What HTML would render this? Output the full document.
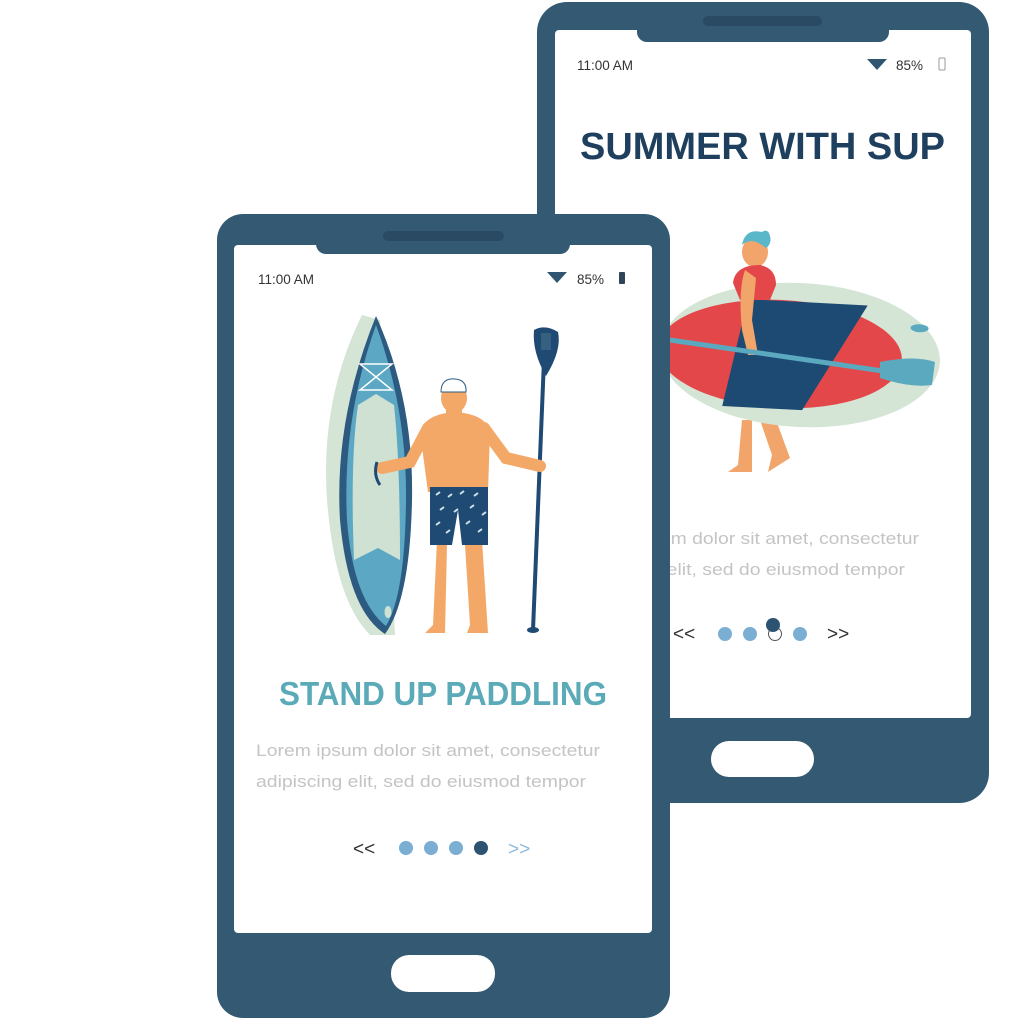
<!DOCTYPE html>
<html><head><meta charset="utf-8"><style>
html,body{margin:0;padding:0;background:#fff;width:1024px;height:1024px;overflow:hidden}
svg{display:block}
text{font-family:"Liberation Sans",sans-serif}
</style></head><body>
<svg width="1024" height="1024" viewBox="0 0 1024 1024" xmlns="http://www.w3.org/2000/svg">
<!-- BACK PHONE -->
<rect x="537" y="2" width="452" height="801" rx="30" fill="#345a73"/>
<rect x="555" y="30" width="416" height="688" rx="4" fill="#fff"/>
<rect x="637" y="2" width="252" height="40" rx="10" fill="#345a73"/>
<rect x="703" y="16" width="119" height="10" rx="5" fill="#2a4a63"/>
<rect x="711" y="741" width="103" height="36" rx="18" fill="#fff"/>
<text x="577" y="70" font-size="13.5" fill="#333">11:00 AM</text>
<path d="M867 59 L887 59 L877 70 Z" fill="#2f5570"/>
<text x="896" y="70" font-size="13.5" fill="#333">85%</text>
<rect x="939" y="58" width="6" height="12" rx="1" fill="none" stroke="#999" stroke-width="1"/>
<text x="580" y="159" font-size="38" font-weight="bold" fill="#1f3f5f" textLength="365" lengthAdjust="spacingAndGlyphs">SUMMER WITH SUP</text>
<!-- woman legs -->
<path d="M742 420 L738 465 L728 472 L752 472 L752 420 Z" fill="#f2a56b"/>
<path d="M760 420 L772 455 L768 472 L790 458 L776 420 Z" fill="#f2a56b"/>
<!-- board -->
<g transform="rotate(3 800 355)">
<ellipse cx="800" cy="355" rx="140" ry="72" fill="#d4e4d5"/>
<ellipse cx="780" cy="355" rx="122" ry="54" fill="#e4474a"/>
<path d="M745 302 L865 302 L805 410 L725 410 Z" fill="#1d4a73"/>
<ellipse cx="918" cy="322" rx="9" ry="4" fill="#5ba9bf"/>
</g>
<!-- woman body -->
<ellipse cx="755" cy="252" rx="13" ry="15" fill="#f2a56b"/>
<path d="M742 245 Q745 228 762 232 Q768 228 770 236 Q772 244 766 248 Q752 236 742 245Z" fill="#5ab6c9"/>
<path d="M733 283 Q735 265 760 265 Q776 268 776 285 L770 300 L740 300 Z" fill="#e4474a"/>
<path d="M745 270 Q738 290 742 330 L748 355 L758 355 L752 320 L756 278 Z" fill="#f2a56b"/>
<!-- paddle -->
<path d="M670 340 L890 372" stroke="#5ba9bf" stroke-width="5"/>
<path d="M880 362 Q915 355 935 362 L932 385 Q910 388 880 378 Z" fill="#5ba9bf"/>
<text x="575" y="544" font-size="17" fill="#c4c4c4" textLength="344" lengthAdjust="spacingAndGlyphs">Lorem ipsum dolor sit amet, consectetur</text>
<text x="575" y="575" font-size="17" fill="#c4c4c4" textLength="330" lengthAdjust="spacingAndGlyphs">adipiscing elit, sed do eiusmod tempor</text>
<text x="673" y="640" font-size="19" fill="#333">&lt;&lt;</text>
<circle cx="725" cy="634" r="7" fill="#7aaed3"/>
<circle cx="750" cy="634" r="7" fill="#7aaed3"/>
<circle cx="775" cy="634" r="6.5" fill="#fff" stroke="#555" stroke-width="1"/>
<circle cx="773" cy="625" r="7" fill="#2d5373"/>
<circle cx="800" cy="634" r="7" fill="#7aaed3"/>
<text x="827" y="640" font-size="19" fill="#333">&gt;&gt;</text>

<!-- FRONT PHONE -->
<rect x="217" y="214" width="453" height="804" rx="26" fill="#345a73"/>
<rect x="234" y="245" width="418" height="688" rx="4" fill="#fff"/>
<rect x="316" y="214" width="254" height="40" rx="10" fill="#345a73"/>
<rect x="383" y="231" width="121" height="10" rx="5" fill="#2a4a63"/>
<rect x="391" y="955" width="104" height="37" rx="18" fill="#fff"/>
<text x="258" y="284" font-size="13.5" fill="#333">11:00 AM</text>
<path d="M547 272 L567 272 L557 283 Z" fill="#2f5570"/>
<text x="577" y="284" font-size="13.5" fill="#333">85%</text>
<rect x="619" y="272" width="6" height="12" rx="1" fill="#2f4458"/>
<!-- board -->
<path d="M362 315 Q320 400 327 500 Q335 600 370 635 L395 635 L380 320 Z" fill="#d4e4d5"/>
<path d="M376 316 Q334 420 340 520 Q348 610 385 634 Q410 600 412 500 Q414 400 376 316 Z" fill="#2c5a80"/>
<path d="M376 325 Q342 420 347 520 Q353 600 386 626 Q405 595 406 500 Q407 410 376 325 Z" fill="#5ca8c4"/>
<path d="M358 405 L376 394 L394 405 Q400 460 400 560 L378 548 L354 560 Q350 460 358 405 Z" fill="#cfe1d3"/>
<path d="M360 364 L392 364 L360 390 L392 390 Z" fill="none" stroke="#fff" stroke-width="1.5"/>
<ellipse cx="388" cy="612" rx="3.5" ry="6" fill="#cfe1d3"/>
<!-- paddle -->
<path d="M545 335 L533 630" stroke="#1f4a73" stroke-width="4"/>
<path d="M534 330 Q545 324 558 332 Q562 350 546 376 Q532 352 534 330 Z" fill="#1f4a73"/>
<path d="M541 333 L551 333 L551 350 L541 350 Z" fill="#35607f"/>
<ellipse cx="533" cy="630" rx="6" ry="3" fill="#1f4a73"/>
<!-- man -->
<path d="M437 540 L433 625 L425 633 L445 633 L447 545 Z" fill="#f4a868"/>
<path d="M465 545 L470 625 L467 633 L488 633 L482 540 Z" fill="#f4a868"/>
<g stroke="#f4a868" stroke-width="12" stroke-linecap="round" fill="none">
<path d="M428 428 L410 462 L382 468"/>
<path d="M484 428 L506 458 L540 466"/>
</g>
<path d="M420 432 Q425 414 455 412 Q486 414 490 432 L488 492 L428 492 Z" fill="#f4a868"/>
<rect x="446" y="400" width="16" height="16" fill="#f4a868"/>
<ellipse cx="454" cy="398" rx="13" ry="15" fill="#f4a868"/>
<path d="M441 392 Q441 378 455 379 Q467 380 466 392 Z" fill="#fff" stroke="#2c5a80" stroke-width="1"/>
<path d="M430 487 L488 487 L488 545 L462 545 L458 510 L452 545 L430 545 Z" fill="#1f4a73"/>
<g stroke="#cfe1e9" stroke-width="2"><path d="M436 495 l4-3 M448 497 l4-3 M460 494 l4-3 M474 496 l4-3 M440 510 l4-3 M454 512 l4-3 M470 508 l4-3 M436 525 l4-3 M446 533 l4-3 M466 524 l4-3 M478 532 l4-3 M482 515 l4-3"/></g>
<path d="M377 462 Q373 475 380 485" stroke="#1f4a73" stroke-width="3" fill="none"/>
<text x="279" y="705" font-size="33" font-weight="bold" fill="#5aaab8" textLength="328" lengthAdjust="spacingAndGlyphs">STAND UP PADDLING</text>
<text x="256" y="756" font-size="17" fill="#c4c4c4" textLength="344" lengthAdjust="spacingAndGlyphs">Lorem ipsum dolor sit amet, consectetur</text>
<text x="256" y="787" font-size="17" fill="#c4c4c4" textLength="330" lengthAdjust="spacingAndGlyphs">adipiscing elit, sed do eiusmod tempor</text>
<text x="353" y="855" font-size="19" fill="#333">&lt;&lt;</text>
<circle cx="406" cy="848" r="7" fill="#7aaed3"/>
<circle cx="431" cy="848" r="7" fill="#7aaed3"/>
<circle cx="456" cy="848" r="7" fill="#7aaed3"/>
<circle cx="481" cy="848" r="7" fill="#2d5373"/>
<text x="508" y="855" font-size="19" fill="#8fbad9">&gt;&gt;</text>
</svg>
</body></html>
